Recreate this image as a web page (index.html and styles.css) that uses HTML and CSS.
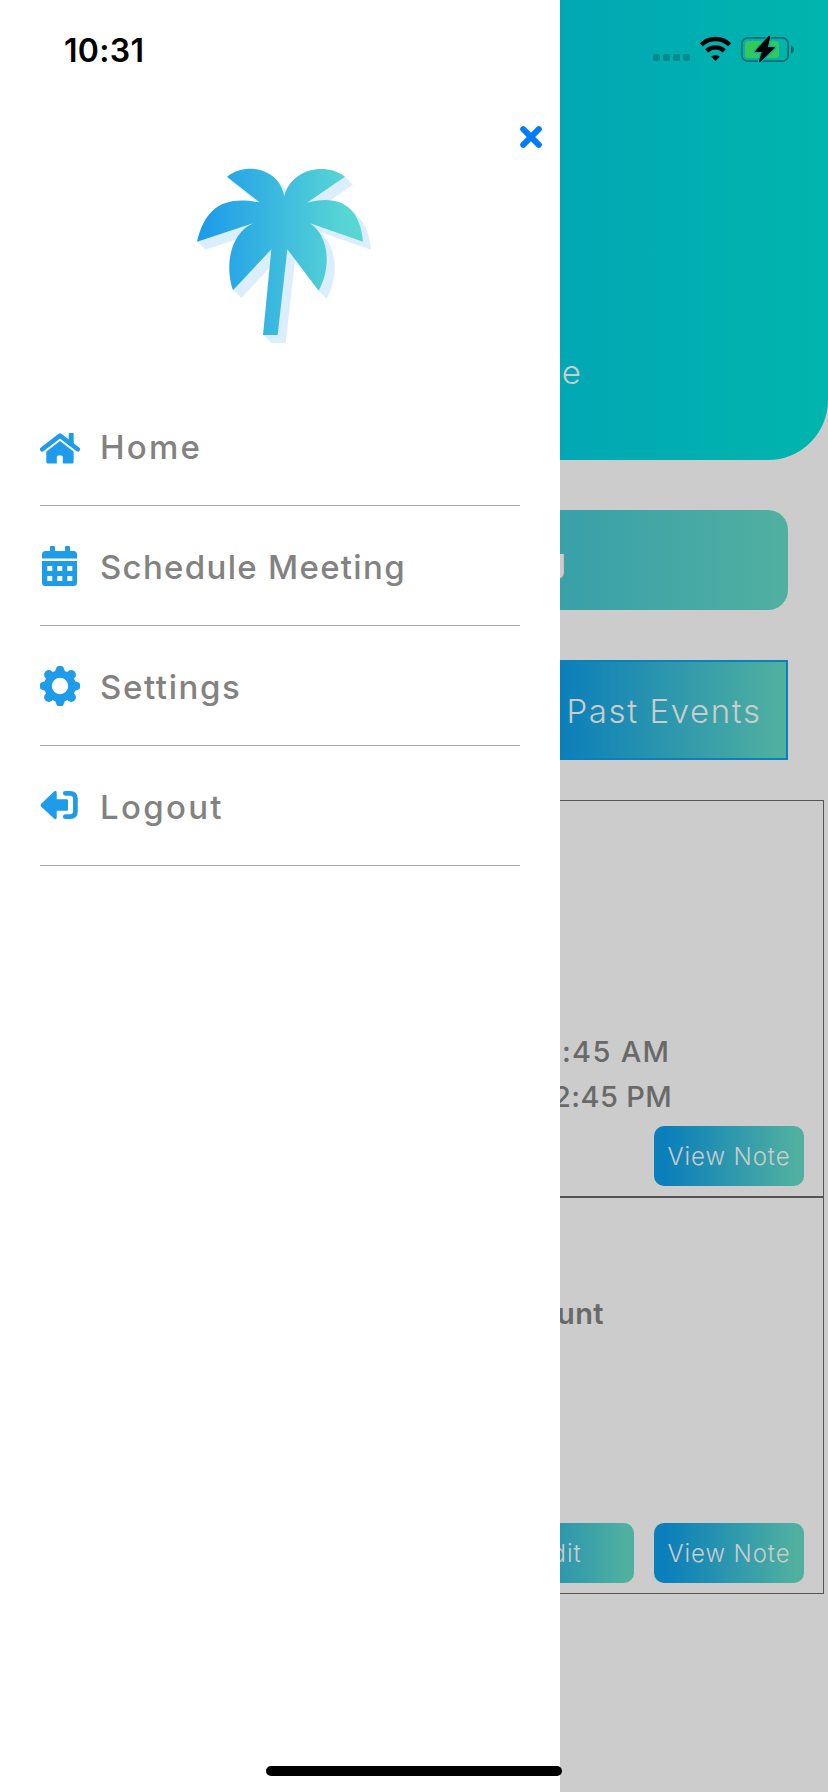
FILE: index.html
```html
<!DOCTYPE html>
<html lang="en">
<head>
<meta charset="utf-8">
<title>Menu</title>
<link rel="stylesheet" href="styles.css">
</head>
<body>
<div class="screen">
  <main class="page">
    <header class="hero"><span class="hero-text">e</span></header>
    <div class="schedule"><span>g</span></div>
    <div class="tabs"><div class="tab"><span class="tab-text">Past Events</span></div></div>
    <section class="card">
      <div class="lines">
        <p class="am">:45 AM</p>
        <p class="pm">2:45 PM</p>
      </div>
      <div class="actions"><span class="btn">View Note</span></div>
    </section>
    <section class="card">
      <div class="lines account"><p class="unt">unt</p></div>
      <div class="actions"><span class="btn">Edit</span><span class="btn">View Note</span></div>
    </section>
  </main>

  <aside class="drawer">
    <svg class="close" viewBox="0 0 24 24"><path d="M4.2 4.2 19.8 19.8M19.8 4.2 4.2 19.8" stroke="#007aff" stroke-width="6" stroke-linecap="round"/></svg>
    <svg class="palm" viewBox="0 0 630 630">
      <defs>
        <linearGradient id="sea" gradientUnits="userSpaceOnUse" x1="60" y1="0" x2="500" y2="0"><stop offset="0" stop-color="#1c9bea"/><stop offset="1" stop-color="#58d6d4"/></linearGradient>
        <path id="tree" d="M141 80C200 35 298 55 313 139C331 62 430 33 495 80L381 158C482 132 540 172 549 275L390 220C446 256 456 350 416 422L322 298L293 555H249L274 298L159 421C134 350 149 252 219 220L51 275C76 172 131 137 239 157Z"/>
      </defs>
      <g fill="#dbeefd">
        <use href="#tree" x="3" y="3"/><use href="#tree" x="6" y="6"/><use href="#tree" x="9" y="9"/><use href="#tree" x="12" y="12"/><use href="#tree" x="15" y="15"/><use href="#tree" x="18" y="18"/><use href="#tree" x="21" y="21"/><use href="#tree" x="24" y="24"/>
      </g>
      <use href="#tree" fill="url(#sea)"/>
    </svg>
    <nav class="menu">
      <div class="item">
        <svg class="icon" viewBox="0 0 40 40"><g fill="#1e9be9"><path d="M28.7 7.800q0-.8.8-.8h3.400q.8 0 .8.8V19l-5-4z"/><path d="M2.300 23.300 20 9.600l17.700 13.700" fill="none" stroke="#1e9be9" stroke-width="4.600" stroke-linecap="round" stroke-linejoin="round"/><path d="M20 15 33.600 25.600V36q0 1.500-1.500 1.500h-9.300v-6.600q0-1.500-1.500-1.500h-3q-1.500 0-1.500 1.500v6.600H7.800q-1.500 0-1.500-1.500V25.600z"/></g></svg>
        <span class="label home">Home</span>
      </div>
      <div class="item">
        <svg class="icon" viewBox="0 0 40 40"><path fill="#1e9be9" fill-rule="evenodd" d="M10 5V1q0-1 1-1h3q1 0 1 1v4h10V1q0-1 1-1h3q1 0 1 1v4h3.500q3.500 0 3.500 3.500v4H2v-4Q2 5 5.500 5zM2 15h35v21.500q0 3.500-3.500 3.500h-28Q2 40 2 36.500zM7.300 20v5h5v-5zm10 0v5h5v-5zm10 0v5h5v-5zm-20 10v5h5v-5zm10 0v5h5v-5zm10 0v5h5v-5z"/></svg>
        <span class="label long">Schedule Meeting</span>
      </div>
      <div class="item">
        <svg class="icon" viewBox="0 0 40 40"><g fill="#1e9be9"><circle cx="20" cy="20" r="12" fill="none" stroke="#1e9be9" stroke-width="7.600"/><path d="M14.500 7 16.500 1.500Q17 0 18.500 0h3Q23 0 23.500 1.500L25.500 7zM14.500 33l2 5.500Q17 40 18.500 40h3q1.500 0 2-1.500l2-5.500zM7 14.500 1.500 16.500Q0 17 0 18.500v3Q0 23 1.500 23.500L7 25.500zM33 14.500l5.500 2Q40 17 40 18.500v3q0 1.500-1.500 2L33 25.500z"/><circle cx="8.800" cy="8.800" r="4.700"/><circle cx="31.200" cy="8.800" r="4.700"/><circle cx="8.800" cy="31.200" r="4.700"/><circle cx="31.200" cy="31.200" r="4.700"/></g></svg>
        <span class="label settings">Settings</span>
      </div>
      <div class="item">
        <svg class="icon" viewBox="0 0 40 40"><path fill="#1e9be9" d="M1 18 14 5.500Q16.700 3.500 16.700 7v6.300h10Q28 13.300 28 14.600v8.800q0 1.300-1.300 1.300h-10V31q0 3.500-2.700 1.500L1 20.500Q0 19.250 1 18z"/><path d="M25.300 7.300H30q5.400 0 5.400 5.400v12.600q0 5.400-5.400 5.400h-4.700" fill="none" stroke="#1e9be9" stroke-width="4.700" stroke-linecap="round"/></svg>
        <span class="label logout">Logout</span>
      </div>
    </nav>
  </aside>

  <div class="status">
    <span class="time">10:31</span>
    <svg class="signals" viewBox="0 0 150 40">
      <g fill="#008a8d"><rect x="3" y="24" width="7" height="7" rx="2"/><rect x="13" y="24" width="7" height="7" rx="2"/><rect x="23" y="24" width="7" height="7" rx="2"/><rect x="33" y="24" width="7" height="7" rx="2"/></g>
      <g fill="none" stroke="#000" stroke-width="4.400"><path d="M51.300 14.800a20.200 20.200 0 0 1 28.400 0"/><path d="M56.700 20.900a12.800 12.800 0 0 1 17.600 0"/></g>
      <path d="M65.500 31 61.200 26.700a6.200 6.200 0 0 1 8.600 0z"/>
      <rect x="91.800" y="7.800" width="46.400" height="23.400" rx="6" fill="none" stroke="#006b6c" stroke-width="1.700"/>
      <rect x="95" y="11" width="34" height="17" rx="3" fill="#34c759"/>
      <path d="M141 15.500q3 1 3 4t-3 4z" fill="#006b6c"/>
      <path d="M118.500 6 105 21.200q-.5.800.5.800h6.300l-2.700 8.500q-.3 2.500 1.400 1.200L124.800 18q.5-1-.7-1h-6.300l2.400-9.500q.3-2.500-1.700-1.500z" stroke="#04b1b0" stroke-width="2.400" paint-order="stroke"/>
    </svg>
  </div>
  <div class="indicator"></div>
</div>
</body>
</html>
```
FILE: styles.css
```css
* { box-sizing: border-box; }
body { margin: 0; font-family: Inter, "Liberation Sans", sans-serif; }
p { margin: 0; }
svg { display: block; }
span, p { white-space: nowrap; }

.screen { position: relative; width: 828px; height: 1792px; overflow: hidden; background: #ccc; }

.page { display: flex; flex-direction: column; }
.hero {
  height: 460px;
  padding: 347px 247px 0 0;
  text-align: right;
  border-radius: 0 0 60px 60px;
  background: linear-gradient(90deg, #0090c0 0, #00a8b4 560px, #00b5ad 828px);
}
.hero-text { font-size: 33px; line-height: 50px; font-weight: 300; color: #ccc; }

.schedule {
  display: flex; align-items: center; justify-content: flex-end;
  height: 100px; margin: 50px 40px 0; padding-right: 222px;
  border-radius: 20px;
  background: linear-gradient(90deg, #0b7fba, #39a0a9 520px, #50b0a0);
  color: #ccc; font-size: 33px; font-weight: 600;
}
.tabs { display: flex; justify-content: flex-end; padding: 50px 40px 40px 0; }
.tab {
  display: flex; align-items: center; justify-content: center;
  width: 248px; height: 100px; padding-top: 2px;
  border: 2px solid #0b80ba;
  background: linear-gradient(90deg, #0b7fba 8%, #50b0a0 98%);
  color: #ccc;
}
.tab-text { font-size: 33px; font-weight: 300; letter-spacing: 1.6px; }

.card {
  display: flex; flex-direction: column; justify-content: space-between;
  height: 397px; margin: 0 4px;
  padding: 228px 19px 10px;
  border: 1px solid #555;
}
.lines { padding-left: 536px; font-size: 29px; font-weight: 500; line-height: 45px; color: #696969; }
.account { margin-top: -135px; }
.am { padding-left: 2px; letter-spacing: 1.3px; }
.pm { margin-left: -7px; letter-spacing: .4px; }
.unt { margin-left: -3px; font-weight: 600; letter-spacing: .4px; }
.actions { display: flex; justify-content: flex-end; gap: 20px; }
.btn {
  display: flex; align-items: center; justify-content: center;
  width: 150px; height: 60px; padding-top: 1px; border-radius: 10px;
  background: linear-gradient(90deg, #0b7fba 8%, #50b0a0 95%);
  color: #ccc; font-size: 24px; font-weight: 300; letter-spacing: .9px;
}

.drawer {
  position: absolute; top: 0; left: 0;
  display: flex; flex-direction: column;
  width: 560px; height: 1792px;
  padding-top: 125px;
  background: #fff;
}
.close { width: 24px; height: 24px; margin-left: 519px; }
.palm { width: 210px; height: 210px; margin: 1px 0 26px 180px; }
.menu { padding: 0 40px; }
.item { display: flex; align-items: center; height: 120px; border-bottom: 1px solid #aaa; }
.icon { width: 40px; height: 40px; margin-right: 20px; }
.label { padding-top: 2px; font-size: 33px; font-weight: 500; line-height: 40px; color: #828282; }
.home { letter-spacing: 2.2px; }
.long { letter-spacing: 1.3px; }
.settings { letter-spacing: 1.6px; }
.logout { letter-spacing: 2.3px; }

.status {
  position: absolute; top: 30px; left: 0;
  display: flex; justify-content: space-between;
  width: 828px; height: 40px; padding: 0 28px 0 64px;
}
.time { font-size: 32px; line-height: 41px; font-weight: 600; letter-spacing: .3px; }
.signals { width: 150px; height: 40px; }
.indicator { position: absolute; left: 266px; top: 1766px; width: 296px; height: 10px; border-radius: 5px; background: #000; }
```
